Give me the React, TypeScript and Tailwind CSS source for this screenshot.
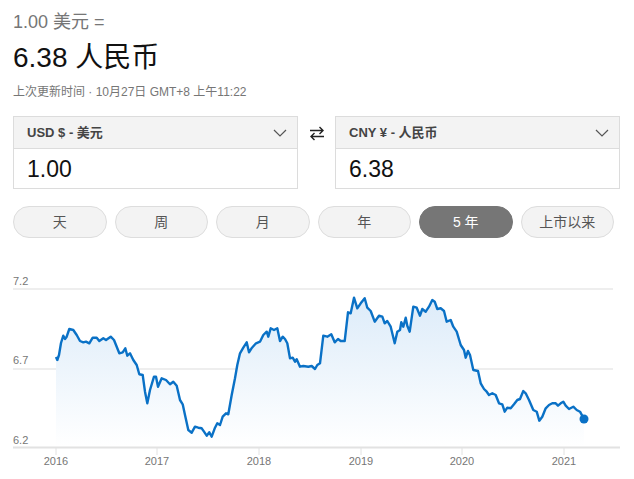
const font = '"Liberation Sans", "Noto Sans CJK SC", sans-serif';

const ranges = ["天", "周", "月", "年", "5 年", "上市以来"];

const years = [
  { x: 56, label: "2016" },
  { x: 157, label: "2017" },
  { x: 259, label: "2018" },
  { x: 361, label: "2019" },
  { x: 462, label: "2020" },
  { x: 564, label: "2021" },
];

// page coordinates, traced from the 5y chart
const pts: [number, number][] = [
  [56, 357], [57.3, 360], [59, 355], [61, 343], [63.3, 335.7], [65, 339], [66.7, 336.7],
  [69.3, 329], [73.3, 330], [76.7, 335], [80, 341], [83.3, 342.3], [86, 341.7], [89.3, 343.3],
  [92.7, 337.7], [96.7, 337.7], [99.3, 341], [103.3, 338.3], [106, 340], [110.7, 336.7],
  [114, 340], [116.7, 346.7], [119.3, 353.3], [122.7, 352.3], [125.3, 348.3], [127.3, 355.7],
  [130, 353.3], [133.3, 360], [136.7, 365], [139.3, 374.3], [142.7, 375], [145, 391.7],
  [147.3, 403.3], [150, 390], [154, 376.7], [156, 376.7], [158, 386.7], [161.7, 378.3],
  [166, 380], [170, 384.3], [173.3, 381.7], [176.7, 385.7], [180, 400], [182.7, 404.3],
  [185, 415], [188.3, 430], [191.7, 432.7], [195, 426.7], [198.3, 427.7], [201.7, 428.3],
  [204, 431.7], [206.7, 435.7], [209.3, 432.3], [211.7, 436.7], [215, 427.7], [217.3, 423.3],
  [220, 425], [222.7, 416.7], [226, 413.3], [228.3, 414.3], [231.7, 395], [235, 378.3],
  [237.3, 365], [240, 353.3], [243.3, 347.7], [246.7, 342.3], [249, 352.3], [252, 347.7],
  [256, 343.3], [260, 341.7], [263.3, 335], [266.7, 331.7], [268.3, 336.7], [270.7, 328.3],
  [274, 330], [277.3, 328.3], [280, 341], [282.7, 336.7], [285, 339], [287.3, 343.3],
  [290, 358.3], [292.7, 357.7], [295, 361.7], [296.7, 359.3], [300, 366.7], [303.3, 366],
  [308.3, 366.7], [311.7, 366], [315, 369], [317.3, 365], [320, 363.3], [323.3, 335.7],
  [327.3, 336.7], [331.3, 334.3], [334.7, 342.3], [338, 339], [340.7, 341], [344.7, 341],
  [348, 312.3], [350.7, 313.3], [354, 297.7], [357.3, 308.3], [360.7, 303.3], [364.7, 298.3],
  [367.3, 307.7], [370.7, 311], [374.7, 321.7], [379, 315.7], [382.3, 316.7], [384.7, 323.3],
  [387.3, 321], [390.7, 326.7], [394.7, 343.3], [397.3, 331.7], [400, 330], [401.3, 322.3],
  [403.3, 326.7], [405.7, 317.7], [407.3, 325.7], [409.7, 331.7], [413.3, 306.7], [416.7, 307.7],
  [420, 315.7], [422.3, 309], [425.7, 311.7], [429, 306.7], [432.3, 300], [434.7, 301.7],
  [437.3, 309], [440.7, 308.3], [444, 311], [446.7, 321.7], [450.7, 320], [453.3, 326.7],
  [456.7, 331.7], [460.7, 345], [464, 350], [465.7, 357.7], [468, 351], [470, 355],
  [473.3, 370], [478, 371], [480.7, 383.3], [484, 389], [486.7, 391.7], [489, 395],
  [492.3, 393.3], [495.7, 395], [499, 403.3], [502.3, 404.3], [504.7, 411.7], [507.3, 407.7],
  [510.7, 408.3], [514, 404.3], [517.3, 400], [520, 399], [523.3, 391], [525.7, 393.3],
  [529, 400], [533.3, 410], [536.7, 411.7], [539.3, 420.7], [542.3, 416.7], [545.7, 408.3],
  [549, 405], [552.3, 403.3], [555.7, 403.3], [558, 405.7], [560.7, 403.3], [563.3, 401.7],
  [565.7, 405.7], [569, 409], [573.3, 406.7], [576.7, 410], [580, 411.7], [584, 419],
];

const line = pts.map((p, i) => `${i ? "L" : "M"}${p[0]} ${p[1]}`).join(" ");
const area = `${line} L584 447 L56 447 Z`;

function Chevron() {
  return (
    <svg width="14" height="8" viewBox="0 0 14 8" fill="none">
      <path d="M1 1l6 6 6-6" stroke="#555" strokeWidth="1.2" />
    </svg>
  );
}

function SwapIcon() {
  return (
    <svg width="16" height="15" viewBox="0 0 16 15" fill="none" stroke="#222" strokeWidth="1.4">
      <path d="M1 4.5h13M10.5 1l3.5 3.5-3.5 3.5" />
      <path d="M15 10.5H2M5.5 7l-3.5 3.5 3.5 3.5" />
    </svg>
  );
}

function CurrencyBox({ label, value }: { label: string; value: string }) {
  return (
    <div className="w-[285px] border border-[#dcdcdc] bg-white">
      <div className="h-[32px] bg-[#f3f3f3] border-b border-[#dcdcdc] flex items-center justify-between pl-[13px] pr-[10px]">
        <span className="text-[13px] font-bold text-[#444]">{label}</span>
        <Chevron />
      </div>
      <div className="h-[39px] flex items-center pl-[13px] pt-[2px] text-[23px] text-[#111]">{value}</div>
    </div>
  );
}

export default function App() {
  return (
    <div className="w-[634px] h-[479px] bg-white overflow-hidden" style={{ fontFamily: font }}>
      <div className="px-[13px] pt-[10px]">
        <div className="text-[18px] leading-[24px] text-[#767676]">1.00 美元 =</div>
        <div className="mt-[7px] text-[28px] leading-[34px] text-[#111]">6.38 人民币</div>
        <div className="mt-[9px] text-[12px] leading-[16px] text-[#767676]">
          上次更新时间 · 10月27日 GMT+8 上午11:22
        </div>

        <div className="mt-[16px] flex items-start">
          <CurrencyBox label="USD $ - 美元" value="1.00" />
          <div className="w-[37px] h-[33px] flex items-center justify-center pt-[2px]">
            <SwapIcon />
          </div>
          <CurrencyBox label="CNY ¥ - 人民币" value="6.38" />
        </div>

        <div className="mt-[17px] w-[601px] flex gap-[8px]">
          {ranges.map((r) => (
            <button
              key={r}
              className={
                r === "5 年"
                  ? "flex-1 h-[32px] rounded-full bg-[#767676] border border-[#767676] text-white text-[14px]"
                  : "flex-1 h-[32px] rounded-full bg-[#f3f3f3] border border-[#dddddd] text-[#555] text-[14px]"
              }
            >
              {r}
            </button>
          ))}
        </div>
      </div>

      <svg width="634" height="241" viewBox="0 238 634 241" className="block">
        <defs>
          <linearGradient id="fill" x1="0" y1="295" x2="0" y2="447" gradientUnits="userSpaceOnUse">
            <stop offset="0" stopColor="#dcebf9" />
            <stop offset="1" stopColor="#ffffff" />
          </linearGradient>
        </defs>
        <line x1="13" y1="289" x2="613" y2="289" stroke="#eeeeee" strokeWidth="2" />
        <line x1="13" y1="369" x2="613" y2="369" stroke="#eeeeee" strokeWidth="2" />
        <path d={area} fill="url(#fill)" />
        <line x1="13" y1="447.5" x2="620" y2="447.5" stroke="#e2e2e2" strokeWidth="2" />
        {years.map((y) => (
          <g key={y.label}>
            <line x1={y.x} y1="448" x2={y.x} y2="455" stroke="#e2e2e2" strokeWidth="1" />
            <text x={y.x} y="465" textAnchor="middle" fontSize="11" fill="#767676" fontFamily={font}>
              {y.label}
            </text>
          </g>
        ))}
        <text x="13" y="285" fontSize="11" fill="#767676" fontFamily={font}>7.2</text>
        <text x="13" y="364" fontSize="11" fill="#767676" fontFamily={font}>6.7</text>
        <text x="13" y="444" fontSize="11" fill="#767676" fontFamily={font}>6.2</text>
        <path d={line} fill="none" stroke="#0a71c6" strokeWidth="2.4" strokeLinejoin="round" />
        <circle cx="584" cy="419" r="4.5" fill="#0a71c6" />
      </svg>
    </div>
  );
}
